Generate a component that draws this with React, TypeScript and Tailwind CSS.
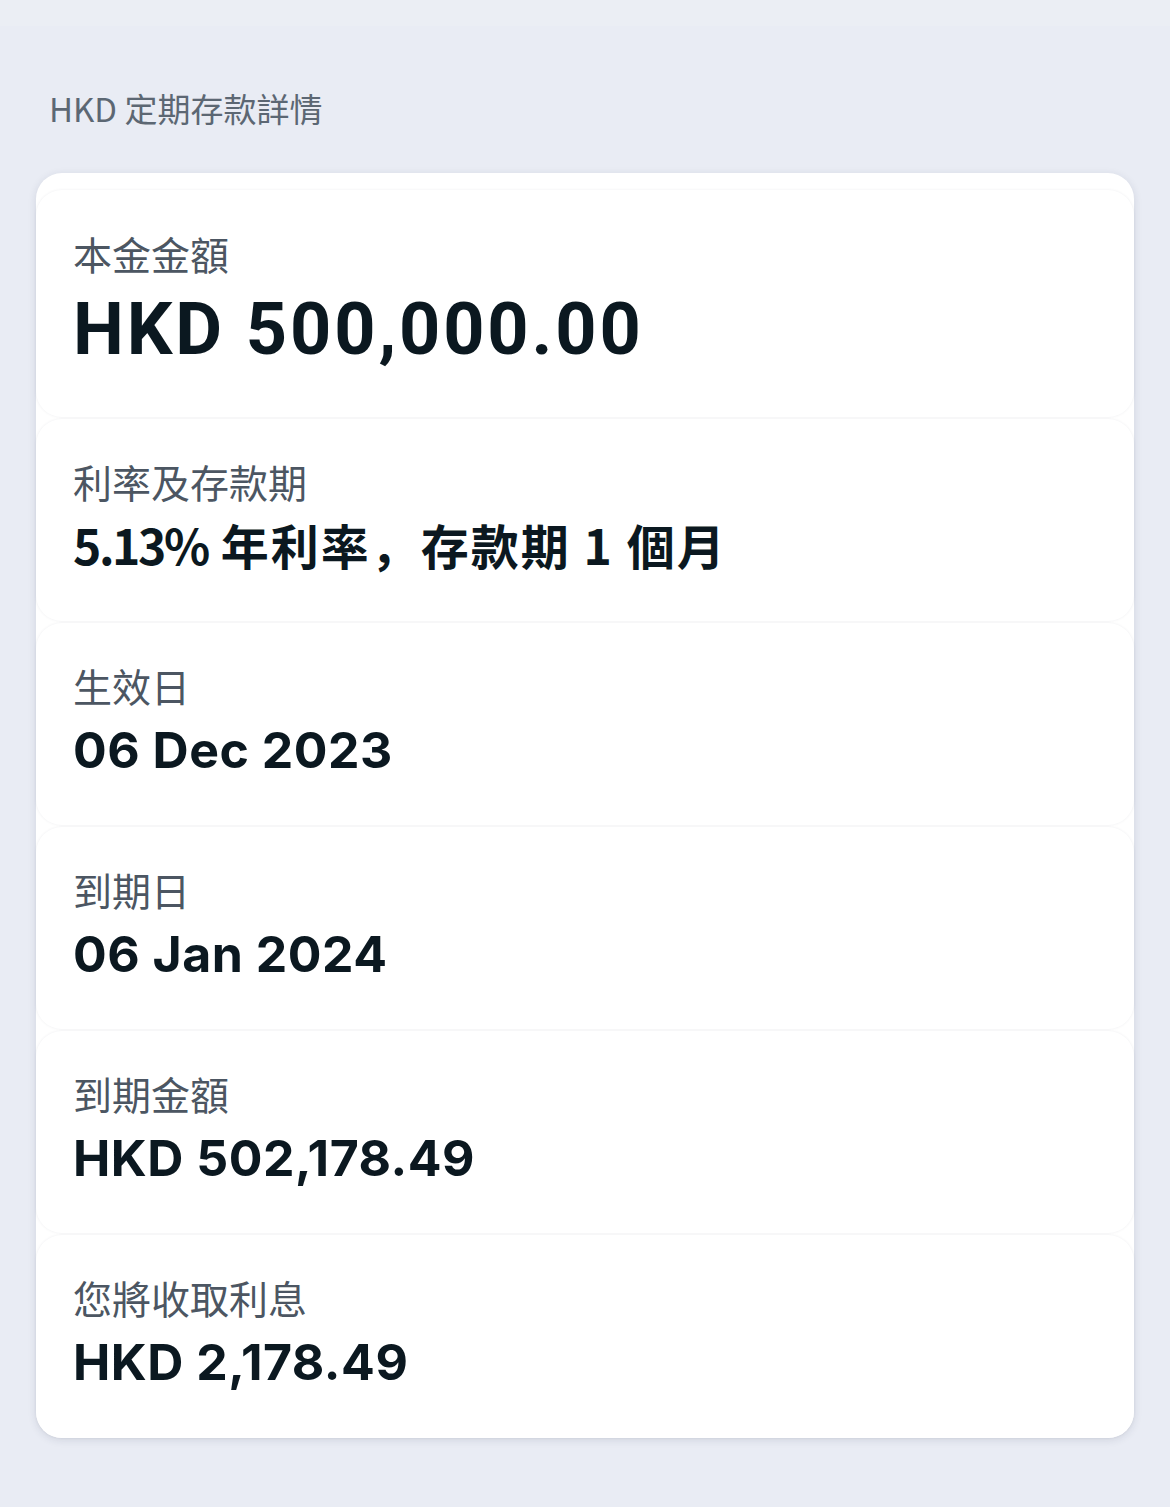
const cjk = { fontFamily: '"Noto Sans CJK TC", "Noto Sans", sans-serif' };
const cjkJp = { fontFamily: '"Noto Sans CJK JP", "Noto Sans CJK TC", sans-serif' };
const latin = { fontFamily: 'Inter, "Noto Sans CJK TC", sans-serif' };
const roboto = { fontFamily: 'Roboto, "Liberation Sans", sans-serif' };

function Row({ label, children, className }: { label: string; children: React.ReactNode; className: string }) {
  return (
    <div className={`rounded-[26px] bg-white pl-[37px] shadow-[0_0_3px_rgba(20,30,60,0.07)] ${className}`}>
      <div className="text-[39px] leading-[46px] text-[#4c5662]" style={cjk}>
        {label}
      </div>
      {children}
    </div>
  );
}

export default function App() {
  return (
    <div className="min-h-[1507px] w-[1170px] bg-[#e9ecf4]">
      <div className="h-[26px] bg-[#ebeef4]" />
      <div className="px-[36px] pb-[70px]">
        <h1 className="pl-[13px] pt-[66px] text-[33px] leading-none text-[#5c6773]" style={cjk}>
          HKD 定期存款詳情
        </h1>
        <div className="mt-[48px] flex flex-col gap-[2px] rounded-[26px] bg-white pt-[17px] shadow-[0_2px_8px_rgba(30,40,70,0.12)]">
          <Row label="本金金額" className="h-[227px] pt-[40px]">
            <div className="mt-[11px] text-[72px] font-bold leading-[86px] tracking-[0.04em] text-[#0b1820]" style={roboto}>
              HKD 500,000.00
            </div>
          </Row>
          <Row label="利率及存款期" className="h-[202px] pt-[39px]">
            <div className="mt-[13px] text-[48px] font-bold leading-[54px] tracking-[2px] text-[#0b1820]" style={cjkJp}>
              <span className="tracking-[-0.05em]">5.13%</span> 年利率，存款期 1 個月
            </div>
          </Row>
          {[
            ['生效日', '06 Dec 2023'],
            ['到期日', '06 Jan 2024'],
            ['到期金額', 'HKD 502,178.49'],
            ['您將收取利息', 'HKD 2,178.49'],
          ].map(([l, v], i) => (
            <Row key={l} label={l} className={`${i === 3 ? 'h-[203px]' : 'h-[202px]'} pt-[39px]`}>
              <div className="mt-[13px] text-[50px] font-bold leading-[58px] tracking-[0.01em] text-[#0b1820]" style={latin}>
                {v}
              </div>
            </Row>
          ))}
        </div>
      </div>
    </div>
  );
}
